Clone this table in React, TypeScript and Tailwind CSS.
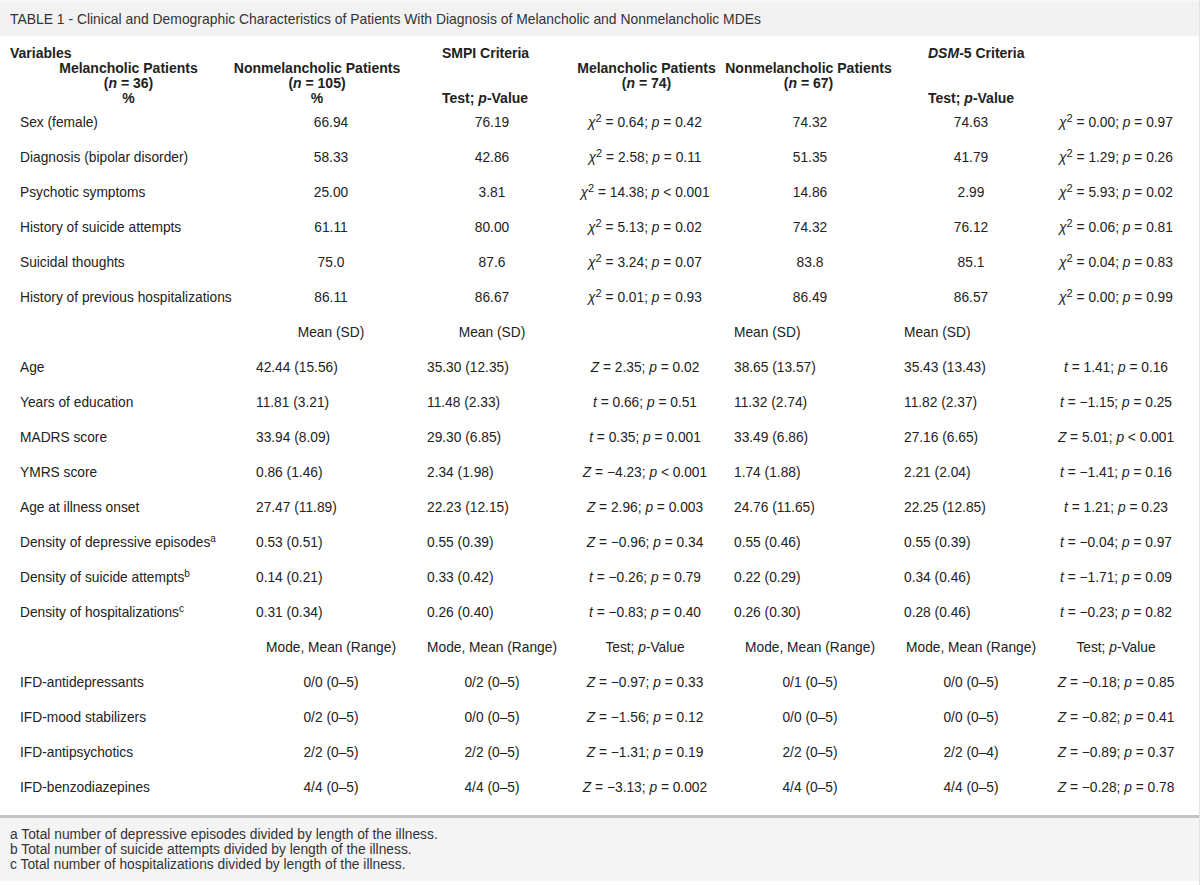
import React from "react";

type Test = [string, string, string];
type Row =
  | { k: "pct" | "mean" | "ifd"; label: React.ReactNode; v: [string, string, Test, string, string, Test] }
  | { k: "meanHead" }
  | { k: "modeHead" };

const T = (s: string, v: string, p: string): Test => [s, v, p];

const rows: Row[] = [
  { k: "pct", label: "Sex (female)", v: ["66.94", "76.19", T("x", "0.64", "= 0.42"), "74.32", "74.63", T("x", "0.00", "= 0.97")] },
  { k: "pct", label: "Diagnosis (bipolar disorder)", v: ["58.33", "42.86", T("x", "2.58", "= 0.11"), "51.35", "41.79", T("x", "1.29", "= 0.26")] },
  { k: "pct", label: "Psychotic symptoms", v: ["25.00", "3.81", T("x", "14.38", "< 0.001"), "14.86", "2.99", T("x", "5.93", "= 0.02")] },
  { k: "pct", label: "History of suicide attempts", v: ["61.11", "80.00", T("x", "5.13", "= 0.02"), "74.32", "76.12", T("x", "0.06", "= 0.81")] },
  { k: "pct", label: "Suicidal thoughts", v: ["75.0", "87.6", T("x", "3.24", "= 0.07"), "83.8", "85.1", T("x", "0.04", "= 0.83")] },
  { k: "pct", label: "History of previous hospitalizations", v: ["86.11", "86.67", T("x", "0.01", "= 0.93"), "86.49", "86.57", T("x", "0.00", "= 0.99")] },
  { k: "meanHead" },
  { k: "mean", label: "Age", v: ["42.44 (15.56)", "35.30 (12.35)", T("Z", "2.35", "= 0.02"), "38.65 (13.57)", "35.43 (13.43)", T("t", "1.41", "= 0.16")] },
  { k: "mean", label: "Years of education", v: ["11.81 (3.21)", "11.48 (2.33)", T("t", "0.66", "= 0.51"), "11.32 (2.74)", "11.82 (2.37)", T("t", "\u22121.15", "= 0.25")] },
  { k: "mean", label: "MADRS score", v: ["33.94 (8.09)", "29.30 (6.85)", T("t", "0.35", "= 0.001"), "33.49 (6.86)", "27.16 (6.65)", T("Z", "5.01", "< 0.001")] },
  { k: "mean", label: "YMRS score", v: ["0.86 (1.46)", "2.34 (1.98)", T("Z", "\u22124.23", "< 0.001"), "1.74 (1.88)", "2.21 (2.04)", T("t", "\u22121.41", "= 0.16")] },
  { k: "mean", label: "Age at illness onset", v: ["27.47 (11.89)", "22.23 (12.15)", T("Z", "2.96", "= 0.003"), "24.76 (11.65)", "22.25 (12.85)", T("t", "1.21", "= 0.23")] },
  { k: "mean", label: <>Density of depressive episodes<sup className="text-[10px]">a</sup></>, v: ["0.53 (0.51)", "0.55 (0.39)", T("Z", "\u22120.96", "= 0.34"), "0.55 (0.46)", "0.55 (0.39)", T("t", "\u22120.04", "= 0.97")] },
  { k: "mean", label: <>Density of suicide attempts<sup className="text-[10px]">b</sup></>, v: ["0.14 (0.21)", "0.33 (0.42)", T("t", "\u22120.26", "= 0.79"), "0.22 (0.29)", "0.34 (0.46)", T("t", "\u22121.71", "= 0.09")] },
  { k: "mean", label: <>Density of hospitalizations<sup className="text-[10px]">c</sup></>, v: ["0.31 (0.34)", "0.26 (0.40)", T("t", "\u22120.83", "= 0.40"), "0.26 (0.30)", "0.28 (0.46)", T("t", "\u22120.23", "= 0.82")] },
  { k: "modeHead" },
  { k: "ifd", label: "IFD-antidepressants", v: ["0/0 (0\u20135)", "0/2 (0\u20135)", T("Z", "\u22120.97", "= 0.33"), "0/1 (0\u20135)", "0/0 (0\u20135)", T("Z", "\u22120.18", "= 0.85")] },
  { k: "ifd", label: "IFD-mood stabilizers", v: ["0/2 (0\u20135)", "0/0 (0\u20135)", T("Z", "\u22121.56", "= 0.12"), "0/0 (0\u20135)", "0/0 (0\u20135)", T("Z", "\u22120.82", "= 0.41")] },
  { k: "ifd", label: "IFD-antipsychotics", v: ["2/2 (0\u20135)", "2/2 (0\u20135)", T("Z", "\u22121.31", "= 0.19"), "2/2 (0\u20135)", "2/2 (0\u20134)", T("Z", "\u22120.89", "= 0.37")] },
  { k: "ifd", label: "IFD-benzodiazepines", v: ["4/4 (0\u20135)", "4/4 (0\u20135)", T("Z", "\u22123.13", "= 0.002"), "4/4 (0\u20135)", "4/4 (0\u20135)", T("Z", "\u22120.28", "= 0.78")] },
];

function TestCell({ t }: { t: Test }) {
  const [s, v, p] = t;
  return (
    <span className="whitespace-nowrap">
      {s === "x" ? (
        <>
          <i>χ</i>
          <sup className="text-[11px]">2</sup>
        </>
      ) : (
        <i>{s}</i>
      )}{" "}
      = {v}; <i>p</i> {p}
    </span>
  );
}

const PV = () => (
  <span className="whitespace-nowrap">
    Test; <i>p</i>-Value
  </span>
);

const cellBase = "flex items-center h-[35px] whitespace-nowrap";
const C = "justify-center";
const L = "justify-start";

function DataRow({ r }: { r: Row }) {
  if (r.k === "meanHead") {
    return (
      <div className="grid grid-cols-[256px_150px_151px_166px_163px_152px_146px]">
        <div className={`${cellBase} pl-[20px]`}></div>
        <div className={`${cellBase} ${C}`}>Mean (SD)</div>
        <div className={`${cellBase} ${C} pl-[21px]`}>Mean (SD)</div>
        <div className={`${cellBase} pl-[10px]`}></div>
        <div className={`${cellBase} ${L} pl-[11px]`}>Mean (SD)</div>
        <div className={`${cellBase} ${L} pl-[18px]`}>Mean (SD)</div>
        <div className={`${cellBase} pl-[10px]`}></div>
      </div>
    );
  }
  if (r.k === "modeHead") {
    return (
      <div className="grid grid-cols-[256px_150px_151px_166px_163px_152px_146px]">
        <div className={`${cellBase} pl-[20px]`}></div>
        <div className={`${cellBase} ${C}`}>Mode, Mean (Range)</div>
        <div className={`${cellBase} ${C} pl-[21px]`}>Mode, Mean (Range)</div>
        <div className={`${cellBase} ${C} pl-[10px]`}>
          <PV />
        </div>
        <div className={`${cellBase} ${C} pl-[11px]`}>Mode, Mean (Range)</div>
        <div className={`${cellBase} ${C} pl-[18px]`}>Mode, Mean (Range)</div>
        <div className={`${cellBase} ${C} pl-[10px]`}>
          <PV />
        </div>
      </div>
    );
  }
  const al = r.k === "mean" ? L : C;
  return (
    <div className="grid grid-cols-[256px_150px_151px_166px_163px_152px_146px]">
      <div className={`${cellBase} ${L} pl-[20px]`}>
        <span>{r.label}</span>
      </div>
      <div className={`${cellBase} ${al}`}>{r.v[0]}</div>
      <div className={`${cellBase} ${al} pl-[21px]`}>{r.v[1]}</div>
      <div className={`${cellBase} ${C} pl-[10px]`}>
        <TestCell t={r.v[2]} />
      </div>
      <div className={`${cellBase} ${al} pl-[11px]`}>{r.v[3]}</div>
      <div className={`${cellBase} ${al} pl-[18px]`}>{r.v[4]}</div>
      <div className={`${cellBase} ${C} pl-[10px]`}>
        <TestCell t={r.v[5]} />
      </div>
    </div>
  );
}

const hl = "h-[15px] flex items-center whitespace-nowrap";

export default function App() {
  return (
    <div
      className="w-[1200px] h-[885px] bg-white text-[#222] overflow-hidden"
      style={{ fontFamily: '"Liberation Sans", Arial, sans-serif' }}
    >
      <div className="border-r border-[#e2e2e2] h-full">
        {/* Title bar */}
        <div className="h-[36px] bg-[#f2f2f2] border-t-2 border-[#f8f8f8] flex items-center pl-[10px] text-[13.9px] text-[#333]">
          TABLE 1 - Clinical and Demographic Characteristics of Patients With Diagnosis of Melancholic and Nonmelancholic MDEs
        </div>

        {/* Header */}
        <div className="pt-[10px] grid grid-cols-[257px_120px_199px_141px_183px_300px] text-[14px] font-bold leading-[15px]">
          <div className="flex flex-col">
            <div className={`${hl} pl-[10px]`}>Variables</div>
            <div className={`${hl} justify-center`}>Melancholic Patients</div>
            <div className={`${hl} justify-center`}>
              (<i>n</i>&nbsp;= 36)
            </div>
            <div className={`${hl} justify-center`}>%</div>
          </div>
          <div className="flex flex-col">
            <div className={hl}></div>
            <div className={`${hl} justify-center`}>Nonmelancholic Patients</div>
            <div className={`${hl} justify-center`}>
              (<i>n</i>&nbsp;= 105)
            </div>
            <div className={`${hl} justify-center`}>%</div>
          </div>
          <div className="flex flex-col pl-[65px]">
            <div className={hl}>SMPI Criteria</div>
            <div className={hl}></div>
            <div className={hl}></div>
            <div className={hl}>
              <PV />
            </div>
          </div>
          <div className="flex flex-col">
            <div className={hl}></div>
            <div className={`${hl} justify-center`}>Melancholic Patients</div>
            <div className={`${hl} justify-center`}>
              (<i>n</i>&nbsp;= 74)
            </div>
            <div className={hl}></div>
          </div>
          <div className="flex flex-col">
            <div className={hl}></div>
            <div className={`${hl} justify-center`}>Nonmelancholic Patients</div>
            <div className={`${hl} justify-center`}>
              (<i>n</i>&nbsp;= 67)
            </div>
            <div className={hl}></div>
          </div>
          <div className="flex flex-col pl-[28px]">
            <div className={hl}>
              <span>
                <i>DSM</i>-5 Criteria
              </span>
            </div>
            <div className={hl}></div>
            <div className={hl}></div>
            <div className={hl}>
              <PV />
            </div>
          </div>
        </div>

        {/* Body */}
        <div className="text-[13.75px]">
          {rows.map((r, i) => (
            <DataRow key={i} r={r} />
          ))}
        </div>

        {/* Footer */}
        <div className="mt-[9px] border-t-[3px] border-[#c4c4c4] bg-[#f4f4f4] h-[66px] pt-[9px] pl-[10px] text-[13.8px] leading-[15px] text-[#333]">
          <div>a Total number of depressive episodes divided by length of the illness.</div>
          <div>b Total number of suicide attempts divided by length of the illness.</div>
          <div>c Total number of hospitalizations divided by length of the illness.</div>
        </div>
      </div>
    </div>
  );
}
